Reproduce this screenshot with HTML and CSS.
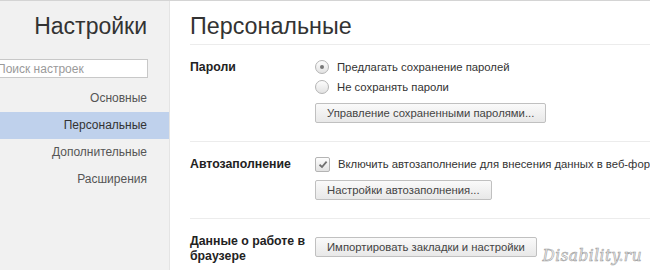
FILE: index.html
```html
<!DOCTYPE html>
<html lang="ru">
<head>
  <meta charset="UTF-8" />
  <title>Настройки - Персональные</title>
  <link rel="stylesheet" href="styles.css">
</head>
<body>

  <div class="page">
    <!-- Sidebar -->
    <div class="sidebar">
      <h1 class="side-title">Настройки</h1>
      <input type="text" class="search" placeholder="Поиск настроек" />
      <div class="nav">
        <div class="nav-item">Основные</div>
        <div class="nav-item active">Персональные</div>
        <div class="nav-item">Дополнительные</div>
        <div class="nav-item">Расширения</div>
      </div>
    </div>

    <!-- Main -->
    <div class="main">
      <h1 class="main-title">Персональные</h1>

      <div class="section">
        <div class="label">Пароли</div>
        <div class="controls">
          <div class="row"><span class="radio checked"></span>Предлагать сохранение паролей</div>
          <div class="row"><span class="radio"></span>Не сохранять пароли</div>
          <button class="btn">Управление сохраненными паролями...</button>
        </div>
      </div>

      <div class="section">
        <div class="label">Автозаполнение</div>
        <div class="controls">
          <div class="row"><span class="check">
            <svg width="10" height="9" viewBox="0 0 10 9"><path d="M1.5 4.8 L4 7 L8.6 1.6" fill="none" stroke="#707070" stroke-width="1.8"/></svg>
          </span>Включить автозаполнение для внесения данных в веб-формы</div>
          <button class="btn">Настройки автозаполнения...</button>
        </div>
      </div>

      <div class="section">
        <div class="label">Данные о работе в браузере</div>
        <div class="controls">
          <button class="btn">Импортировать закладки и настройки</button>
        </div>
      </div>

      <div class="watermark">Disability.ru</div>
    </div>
  </div>

</body>
</html>
```

FILE: styles.css
```css
body {
  font-family: "Liberation Sans", Arial, sans-serif;
  font-size: 11.3px;
  color: #333;
  background: #fff;
  margin: 0;
  overflow: hidden;
}
.page {
  display: flex;
  height: 270px;
  border-top: 1px solid #d4d4d4;
  box-sizing: border-box;
}
.sidebar {
  width: 170px;
  flex-shrink: 0;
  background: #f1f1f1;
  border-right: 1px solid #e4e4e4;
  padding-right: 22px;
  box-sizing: border-box;
  text-align: right;
}
.side-title {
  margin: 0;
  padding-top: 9px;
  font-size: 23px;
  font-weight: normal;
  line-height: 32px;
  color: #333;
}
.search {
  display: block;
  width: 154px;
  height: 19px;
  margin: 17px 0 0 -6px;
  padding: 0 2px;
  box-sizing: border-box;
  border: 1px solid #c8c8c8;
  background: #fff;
  font-family: inherit;
  font-size: 12px;
  color: #333;
  outline: none;
}
.search::placeholder {
  color: #9a9a9a;
}
.nav {
  margin-top: 7px;
  margin-right: -22px;
}
.nav-item {
  line-height: 27px;
  padding-right: 22px;
  font-size: 12px;
  color: #555;
}
.nav-item.active {
  background: #bfd1ec;
  color: #333;
}
.main {
  flex: 1;
  position: relative;
  padding-left: 20px;
  overflow: hidden;
}
.main-title {
  margin: 0;
  padding-top: 9px;
  font-size: 23.3px;
  font-weight: normal;
  line-height: 32px;
  color: #333;
}
.section {
  display: flex;
  border-top: 1px solid #ececec;
  padding: 12px 0 18px;
}
.section:nth-of-type(1) {
  margin-top: 2px;
}
.section:last-of-type {
  border-bottom: 1px solid #ececec;
  padding-bottom: 4px;
}
.label {
  width: 125px;
  flex-shrink: 0;
  font-weight: bold;
  font-size: 12.3px;
  color: #222;
  line-height: 15px;
  padding-top: 3px;
  padding-right: 8px;
  box-sizing: border-box;
}
.controls {
  display: flex;
  flex-direction: column;
  align-items: flex-start;
  white-space: nowrap;
}
.row {
  display: flex;
  align-items: center;
  height: 20px;
  color: #333;
}
.radio {
  width: 12px;
  height: 12px;
  border-radius: 50%;
  border: 1px solid #b4b4b4;
  background: linear-gradient(#fdfdfd, #e2e2e2);
  margin-right: 8px;
  display: flex;
  align-items: center;
  justify-content: center;
}
.radio.checked::after {
  content: "";
  width: 4px;
  height: 4px;
  border-radius: 50%;
  background: #777;
}
.check {
  width: 13px;
  height: 13px;
  border: 1px solid #b4b4b4;
  border-radius: 2px;
  background: linear-gradient(#fdfdfd, #e2e2e2);
  margin-right: 8px;
  display: flex;
  align-items: center;
  justify-content: center;
}
.btn {
  height: 20px;
  margin-top: 6px;
  padding: 0 11px;
  border: 1px solid #c0c0c0;
  border-radius: 2px;
  background: linear-gradient(#fafafa, #e8e8e8);
  font-family: inherit;
  font-size: 11.3px;
  color: #444;
  cursor: pointer;
}
.section:last-of-type .btn {
  margin-top: 0;
}
.watermark {
  position: absolute;
  right: 8px;
  bottom: 5px;
  font-family: "DejaVu Serif", serif;
  font-stretch: condensed;
  font-style: italic;
  font-size: 17px;
  letter-spacing: 0.5px;
  color: #f6f6f6;
  -webkit-text-stroke: 0.6px #a0a0a0;
}
```
